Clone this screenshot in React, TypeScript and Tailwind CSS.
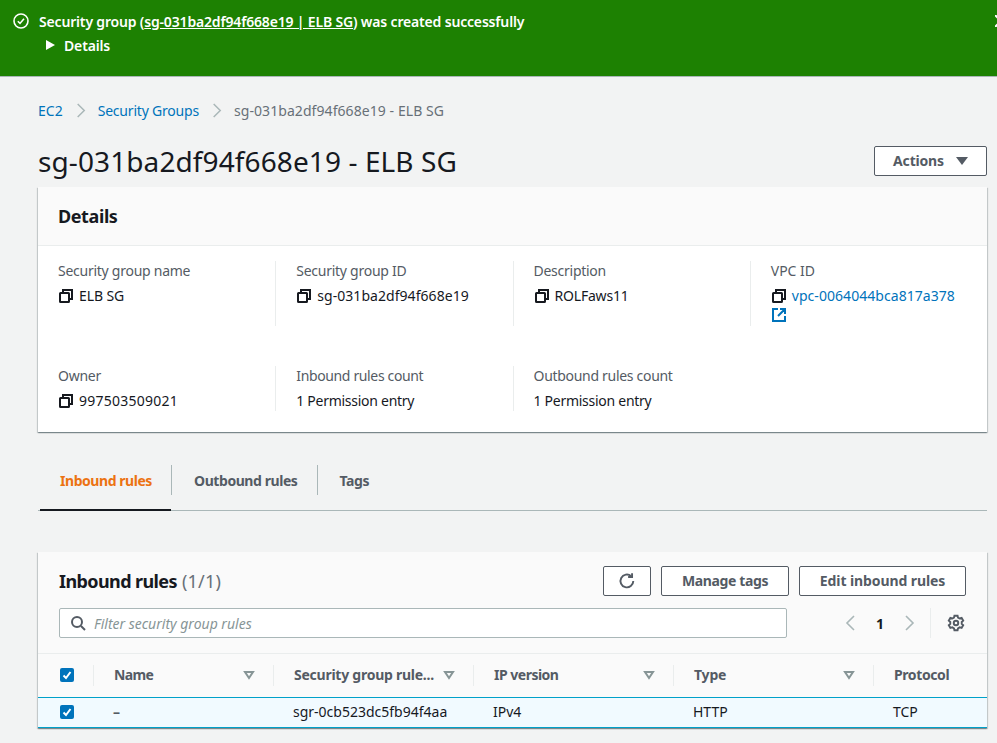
import React from "react";

const Copy = () => (
  <svg width="16" height="16" viewBox="0 0 16 16" fill="none" stroke="#16191f" strokeWidth="2" className="shrink-0">
    <rect x="2" y="5" width="9" height="9" rx="0.5" />
    <path d="M5 5V2h9v9h-3" />
  </svg>
);

const Caret = () => (
  <svg width="12" height="10" viewBox="0 0 12 10" fill="none" stroke="#879596" strokeWidth="2" className="shrink-0">
    <path d="M2 2h8L6 8z" />
  </svg>
);

const Chevron = ({ flip, cls }: { flip?: boolean; cls: string }) => (
  <svg width="16" height="16" viewBox="0 0 16 16" fill="none" strokeWidth="1.6" className={cls}>
    <path d={flip ? "M11 1 4 8l7 7" : "M5 1l7 7-7 7"} stroke="currentColor" />
  </svg>
);

const Check = () => (
  <span className="flex h-[14px] w-[14px] items-center justify-center rounded-[2px] bg-[#0073bb]">
    <svg width="12" height="12" viewBox="0 0 12 12" fill="none" stroke="#fff" strokeWidth="2">
      <path d="M2.5 6.5 5 9l4.5-6" />
    </svg>
  </span>
);

const Btn = ({ children, cls }: { children: React.ReactNode; cls: string }) => (
  <button className={`flex h-[30px] items-center justify-center rounded-[2px] border border-[#545b64] bg-white pb-[1px] text-[14px] font-bold text-[#545b64] ${cls}`}>
    {children}
  </button>
);

const Field = ({ label, children, wide, cls }: { label: string; children: React.ReactNode; wide?: boolean; cls?: string }) => (
  <div className={`border-l border-[#eaeded] pl-5 first:border-l-0 ${wide ? "h-[65px]" : "h-[45px]"}`}>
    <div className={`h-[25px] text-[14px] leading-[19px] text-[#545b64] ${cls ?? "tracking-[-0.26px]"}`}>{label}</div>
    {children}
  </div>
);

const Val = ({ copy, children, cls }: { copy?: boolean; children: React.ReactNode; cls?: string }) => (
  <div className="flex items-center gap-[5px] text-[14px] leading-[20px] text-[#16191f]">
    {copy && <Copy />}
    <span className={cls}>{children}</span>
  </div>
);

const Head = ({ label, w, caret, cls }: { label: string; w: string; caret?: boolean; cls?: string }) => (
  <div className={`flex h-[21px] items-center justify-between border-l border-[#eaeded] pb-[2px] pl-5 pr-[18px] text-[14px] font-bold text-[#545b64] ${w} ${cls ?? ""}`}>
    <span>{label}</span>
    {caret && <Caret />}
  </div>
);

export default function App() {
  return (
    <div className="h-[743px] w-[997px] overflow-hidden bg-[#f2f3f3] font-['Noto_Sans',sans-serif]">
      <div className="flex h-[77px] border-b border-[#aab7b8] bg-[#1d8102] pl-[13px] pt-[12px] text-white">
        <div className="flex flex-col">
          <div className="flex h-[18px] items-center gap-[10px] text-[14px] font-semibold">
            <svg width="16" height="16" viewBox="0 0 16 16" fill="none" stroke="#fff" strokeWidth="1.6">
              <circle cx="8" cy="8" r="7" />
              <path d="M4.8 8.2 7 10.4l4-4.6" />
            </svg>
            <span className="tracking-[-0.17px]">
              Security group (<span className="underline">sg-031ba2df94f668e19 | ELB SG</span>) was created successfully
            </span>
          </div>
          <div className="mt-[6px] flex h-[18px] items-center gap-[9px] pl-[33px] text-[14px] font-semibold">
            <svg width="9" height="10" viewBox="0 0 9 10" fill="#fff"><path d="M0 0l9 5-9 5z" /></svg>
            <span className="tracking-[-0.15px]">Details</span>
          </div>
        </div>
        <div className="ml-auto mt-[3px] h-3 w-[2px] overflow-hidden">
          <svg width="12" height="12" viewBox="0 0 12 12" stroke="#fff" strokeWidth="2"><path d="M0 0l12 12M12 0 0 12" /></svg>
        </div>
      </div>

      <div className="pl-[38px] pr-[10px]">
        <div className="flex h-[68px] items-center pb-[1px] text-[14px] leading-[20px]">
          <span className="text-[#0073bb]">EC2</span>
          <Chevron cls="mx-[10px] h-[15px] w-[15px] text-[#aab7b8]" />
          <span className="tracking-[-0.2px] text-[#0073bb]">Security Groups</span>
          <Chevron cls="mx-[10px] h-[15px] w-[15px] text-[#aab7b8]" />
          <span className="tracking-[0.07px] text-[#687078]">sg-031ba2df94f668e19 - ELB SG</span>
        </div>

        <div className="flex h-[42px] items-start justify-between pt-[1px]">
          <h1 className="-mt-[2px] text-[28px] font-normal leading-[34px] tracking-[0.1px] text-[#16191f]">sg-031ba2df94f668e19 - ELB SG</h1>
          <Btn cls="w-[113px] gap-[12px]">
            <span className="tracking-[-0.18px]">Actions</span>
            <svg width="12" height="8" viewBox="0 0 12 8" fill="#545b64"><path d="M0 0h12L6 8z" /></svg>
          </Btn>
        </div>

        <section className="h-[245px] bg-white shadow-[0_1px_1px_0_rgba(0,28,36,0.3),1px_1px_1px_0_rgba(0,28,36,0.15),-1px_1px_1px_0_rgba(0,28,36,0.15)]">
          <div className="flex h-[59px] items-center border-b border-[#eaeded] bg-[#fafafa] pl-5 text-[18px] font-bold tracking-[-0.4px] text-[#16191f]">Details</div>
          <div className="grid grid-cols-4 pt-[15px]">
            <Field label="Security group name" wide><Val copy cls="tracking-[-0.1px]">ELB SG</Val></Field>
            <Field label="Security group ID" wide><Val copy cls="tracking-[0.05px]">sg-031ba2df94f668e19</Val></Field>
            <Field label="Description" wide><Val copy cls="tracking-[-0.2px]">ROLFaws11</Val></Field>
            <div className="h-[65px] border-l border-[#eaeded] pl-5">
              <div className="h-[25px] text-[14px] leading-[19px] text-[#545b64]">VPC ID</div>
              <div className="flex items-center gap-[5px] text-[14px] leading-[20px] text-[#0073bb]"><Copy /><span className="tracking-[0.05px]">vpc-0064044bca817a378</span></div>
              <svg width="16" height="16" viewBox="0 0 16 16" fill="none" stroke="#0073bb" strokeWidth="2" className="mt-[1px]">
                <path d="M7 2H2v12h12V9M9 2h5v5M14 2 7 9" />
              </svg>
            </div>
          </div>
          <div className="grid grid-cols-4 pt-[40px]">
            <Field label="Owner"><Val copy cls="tracking-[0.25px]">997503509021</Val></Field>
            <Field label="Inbound rules count" cls="tracking-[-0.36px]"><Val cls="tracking-[-0.27px]">1 Permission entry</Val></Field>
            <Field label="Outbound rules count" cls="tracking-[-0.3px]"><Val cls="tracking-[-0.27px]">1 Permission entry</Val></Field>
          </div>
        </section>

        <nav className="mt-[33px] flex h-[46px] items-start border-b border-[#aab7b8] pl-[2px] text-[14px] font-bold">
          <div className="flex h-[46px] w-[131px] items-center border-b-2 border-[#16191f] pb-[14px] pl-5 pt-[1px] tracking-[-0.45px] text-[#ec7211]">Inbound rules</div>
          <div className="flex h-[30px] items-center border-l border-[#aab7b8] pl-[22px] pr-[20px] tracking-[-0.43px] text-[#545b64]">Outbound rules</div>
          <div className="flex h-[30px] items-center border-l border-[#aab7b8] px-[21px] tracking-[-0.4px] text-[#545b64]">Tags</div>
        </nav>

        <section className="mt-[41px] h-[176px] bg-[#fafafa] shadow-[0_1px_1px_0_rgba(0,28,36,0.3),1px_1px_1px_0_rgba(0,28,36,0.15),-1px_1px_1px_0_rgba(0,28,36,0.15)]">
          <div className="flex items-start pl-[21px] pr-[21px] pt-[14px]">
            <div className="flex h-[30px] items-center text-[18px] font-bold tracking-[-0.6px] text-[#16191f]">
              Inbound rules<span className="ml-[5px] font-normal tracking-[0.2px] text-[#687078]">(1/1)</span>
            </div>
            <div className="ml-auto flex gap-[10px]">
              <Btn cls="w-[48px]">
                <svg width="18" height="18" viewBox="0 0 16 16" fill="none" stroke="#545b64" strokeWidth="1.7">
                  <path d="M13.6 8A5.7 5.7 0 1 1 11.7 3.7" />
                  <path d="M12.5 1v3.5H9" />
                </svg>
              </Btn>
              <Btn cls="w-[128px] tracking-[-0.38px]">Manage tags</Btn>
              <Btn cls="w-[167px] tracking-[-0.1px]">Edit inbound rules</Btn>
            </div>
          </div>
          <div className="mt-[12px] flex h-[30px] items-center pl-[21px] pr-[21px]">
            <div className="flex h-[30px] w-[728px] items-center gap-[8px] rounded-[2px] border border-[#aab7b8] bg-white pl-[10px]">
              <svg width="16" height="16" viewBox="0 0 16 16" fill="none" stroke="#545b64" strokeWidth="2">
                <circle cx="7" cy="7" r="5" />
                <path d="m11 11 4 4" />
              </svg>
              <span className="text-[14px] italic text-[#879596]">Filter security group rules</span>
            </div>
            <Chevron flip cls="ml-[56px] text-[#aab7b8]" />
            <span className="ml-[17px] text-[14px] font-bold text-[#16191f]">1</span>
            <Chevron cls="ml-[17px] text-[#aab7b8]" />
            <div className="ml-[13px] flex h-[30px] items-center border-l border-[#eaeded] pl-[16px]">
              <svg width="18" height="18" viewBox="0 0 16 16" fill="none" stroke="#545b64" strokeWidth="1.7">
                <circle cx="8" cy="8" r="2" />
                <path d="M6.6 1.5h2.8l.4 1.7 1.5.8 1.7-.5 1.4 2.4-1.3 1.2v1.7l1.3 1.2-1.4 2.4-1.7-.5-1.5.8-.4 1.7H6.6l-.4-1.7-1.5-.8-1.7.5-1.4-2.4 1.3-1.2V7.1L1.6 5.9 3 3.5l1.7.5 1.5-.8z" />
              </svg>
            </div>
          </div>
          <div className="mt-[15px] flex h-[44px] items-center border-t border-[#eaeded]">
            <div className="flex w-[55px] items-center justify-center pb-[2px] pl-[3px]"><Check /></div>
            <Head label="Name" w="w-[180px] tracking-[-0.6px]" caret />
            <Head label="Security group rule..." w="w-[200px] tracking-[-0.25px]" caret />
            <Head label="IP version" w="w-[200px] tracking-[-0.5px]" caret />
            <Head label="Type" w="w-[200px] tracking-[-0.2px]" caret />
            <Head label="Protocol" w="flex-1 tracking-[-0.4px]" cls="!pr-0" />
          </div>
          <div className="flex h-[31px] items-center border-y-[1.5px] border-[#00a1c9] bg-[#f1faff] pb-[2px] text-[14px] text-[#16191f]">
            <div className="flex w-[55px] items-center justify-center pl-[3px]"><Check /></div>
            <div className="w-[180px] pl-[20px] font-bold text-[#545b64]">–</div>
            <div className="w-[200px] pl-[20px]">sgr-0cb523dc5fb94f4aa</div>
            <div className="w-[200px] pl-[20px]">IPv4</div>
            <div className="w-[200px] pl-[20px]">HTTP</div>
            <div className="flex-1 pl-[20px]">TCP</div>
          </div>
        </section>
      </div>
    </div>
  );
}
